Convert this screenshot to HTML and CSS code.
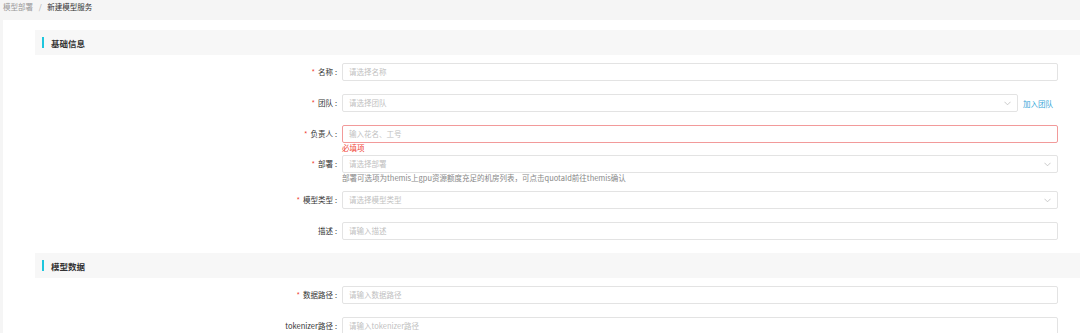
FILE: index.html
```html
<!DOCTYPE html>
<html lang="zh-CN">
<head>
    <meta charset="UTF-8">
    <meta name="viewport" content="width=device-width, initial-scale=1.0">
    <title>新建模型服务</title>
    <link rel="stylesheet" href="styles.css">
</head>
<body>
    <!-- 面包屑 -->
    <div class="breadcrumb">
        <span class="crumb">模型部署</span>
        <span class="sep">/</span>
        <span class="crumb current">新建模型服务</span>
    </div>

    <div class="card">
        <!-- 基础信息 -->
        <div class="section-title"><i class="bar"></i>基础信息</div>

        <div class="form-item">
            <label class="label required">名称</label>
            <div class="control">
                <div class="input">请选择名称</div>
            </div>
        </div>

        <div class="form-item">
            <label class="label required">团队</label>
            <div class="control">
                <div class="row">
                    <div class="input select short">请选择团队
                        <svg class="arrow" viewBox="0 0 8 5" width="7" height="5"><polyline points="0.5,0.5 4,4 7.5,0.5" fill="none" stroke="#bdbdbd" stroke-width="0.9"/></svg>
                    </div>
                    <a class="link" href="#">加入团队</a>
                </div>
            </div>
        </div>

        <div class="form-item has-error">
            <label class="label required">负责人</label>
            <div class="control">
                <div class="input error">输入花名、工号</div>
                <div class="explain">必填项</div>
            </div>
        </div>

        <div class="form-item has-help">
            <label class="label required">部署</label>
            <div class="control">
                <div class="input select">请选择部署
                    <svg class="arrow" viewBox="0 0 8 5" width="7" height="5"><polyline points="0.5,0.5 4,4 7.5,0.5" fill="none" stroke="#bdbdbd" stroke-width="0.9"/></svg>
                </div>
                <div class="help">部署可选项为themis上gpu资源额度充足的机房列表，可点击quotaId前往themis确认</div>
            </div>
        </div>

        <div class="form-item">
            <label class="label required">模型类型</label>
            <div class="control">
                <div class="input select">请选择模型类型
                    <svg class="arrow" viewBox="0 0 8 5" width="7" height="5"><polyline points="0.5,0.5 4,4 7.5,0.5" fill="none" stroke="#bdbdbd" stroke-width="0.9"/></svg>
                </div>
            </div>
        </div>

        <div class="form-item">
            <label class="label">描述</label>
            <div class="control">
                <div class="input">请输入描述</div>
            </div>
        </div>

        <!-- 模型数据 -->
        <div class="section-title"><i class="bar"></i>模型数据</div>

        <div class="form-item">
            <label class="label required">数据路径</label>
            <div class="control">
                <div class="input">请输入数据路径</div>
            </div>
        </div>

        <div class="form-item">
            <label class="label">tokenizer路径</label>
            <div class="control">
                <div class="input">请输入tokenizer路径</div>
            </div>
        </div>
    </div>
</body>
</html>
```

FILE: styles.css
```css
body{
    margin: 0;
    background-color: #f5f5f5;
    font-family: "Noto Sans CJK SC", "Noto Sans", sans-serif;
    font-size: 7.5px;
    color: #333;
}
/* 面包屑 */
.breadcrumb{
    height: 20px; line-height: 14px;
    padding: 0 3px;
    color: #999;
}
.breadcrumb .sep{margin: 0 4px; color: #aaa;}
.breadcrumb .current{color: #333;}

/* 内容卡片 */
.card{
    margin-left: 3px;
    background-color: #fff;
    padding: 10px 0 20px 32px;
}
.section-title{
    display: flex; align-items: center;
    height: 25px;
    padding-left: 7px;
    margin-bottom: 8px;
    background-color: #f7f7f7;
    font-size: 8.5px; font-weight: bold; color: #333;
}
.section-title .bar{
    width: 2px; height: 11px;
    margin-right: 7px;
    background-color: #1ec6dd;
}

/* 表单项 */
.form-item{
    display: flex;
    margin-bottom: 13px;
    margin-right: 22px;
}
.form-item.has-error{margin-bottom: 2px;}
.form-item.has-help{margin-bottom: 8px;}
.label{
    width: 307px; flex: none;
    height: 18px; line-height: 18px;
    text-align: right;
    color: #333;
}
.label::after{content: ":"; margin: 0 5px 0 2px;}
.label.required::before{
    content: "*";
    color: #f04134;
    margin-right: 3px;
}
.control{flex: 1; min-width: 0;}
.row{display: flex; align-items: center;}
.input{
    position: relative;
    box-sizing: border-box;
    height: 18px; line-height: 16px;
    padding: 0 6px;
    border: 1px solid #e3e3e3;
    border-radius: 2px;
    color: #bfbfbf;
    background-color: #fff;
}
.input.short{width: 676px; flex: none;}
.input.error{border-color: #f29a9a;}
.select .arrow{position: absolute; right: 6px; top: 6px;}
.link{
    margin-left: 5px;
    color: #35a6d8;
    text-decoration: none;
}
.explain{
    height: 10px; line-height: 10px;
    color: #f04134;
}
.help{
    height: 10px; line-height: 10px;
    color: #888;
}
```
